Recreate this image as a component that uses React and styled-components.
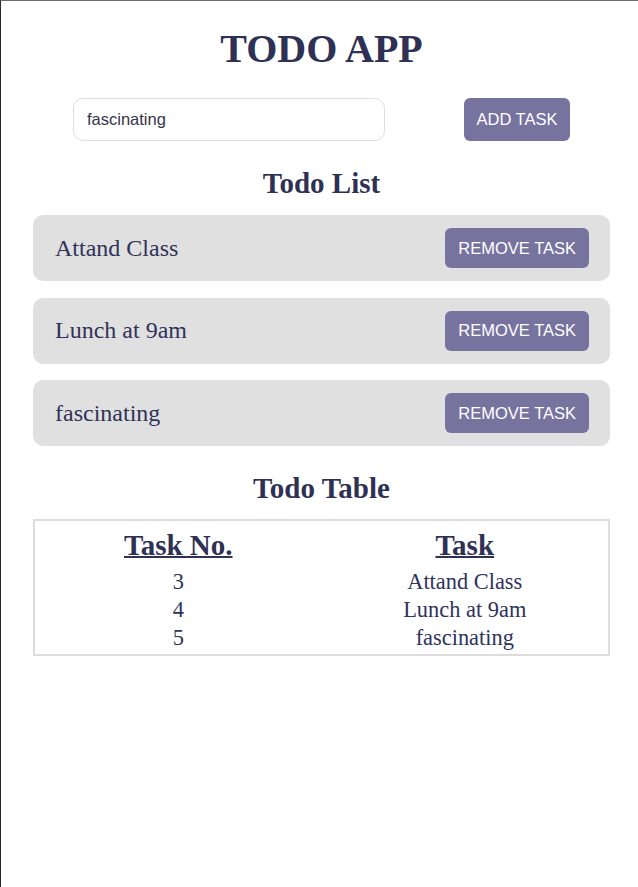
import React, { useState } from "react";
import styled, { createGlobalStyle } from "styled-components";

const Global = createGlobalStyle`
  html, body { margin: 0; padding: 0; background: #fff; }
  body { font-family: "Liberation Serif", "Times New Roman", serif; color: #30325a; }
`;

const Page = styled.div`
  box-sizing: border-box;
  min-height: 887px;
  border-top: 1px solid #6e6e6e;
  border-left: 1px solid #2a2a2a;
  padding: 25px 28px 20px 32px;
  display: flex;
  flex-direction: column;
  align-items: stretch;
`;

const Title = styled.h1`
  margin: 0;
  text-align: center;
  font-size: 40px;
  line-height: 46px;
  font-weight: 700;
  color: #2e3154;
`;

const InputRow = styled.form`
  margin-top: 26px;
  display: flex;
  justify-content: center;
  gap: 79px;
`;

const TextInput = styled.input`
  box-sizing: border-box;
  width: 312px;
  height: 43px;
  border: 1px solid #dedede;
  border-radius: 10px;
  padding: 0 13px;
  font-family: "Liberation Sans", Arial, sans-serif;
  font-size: 16.5px;
  color: #35354a;
  outline: none;
`;

const Button = styled.button`
  box-sizing: border-box;
  height: ${(p) => p.$h}px;
  padding: 0 ${(p) => p.$px}px;
  border: none;
  border-radius: 6px;
  background: #77739f;
  color: #fff;
  font-family: "Liberation Sans", Arial, sans-serif;
  font-size: 16.5px;
  cursor: pointer;
  flex: none;
`;

const SectionTitle = styled.h2`
  margin: ${(p) => p.$mt}px 0 0;
  text-align: center;
  font-size: 29px;
  line-height: 33px;
  font-weight: 700;
  color: #2e3154;
`;

const List = styled.ul`
  list-style: none;
  margin: 15px 0 0;
  padding: 0;
  display: flex;
  flex-direction: column;
  gap: 16.5px;
`;

const Item = styled.li`
  box-sizing: border-box;
  height: 66px;
  background: #e0e0e0;
  border-radius: 10px;
  padding: 0 21px 0 22px;
  display: flex;
  align-items: center;
  justify-content: space-between;
  font-size: 24px;
  color: #30325a;
`;

const Table = styled.table`
  margin-top: 14px;
  width: 100%;
  border: 2px solid #dcdcdc;
  border-collapse: separate;
  border-spacing: 0;
  table-layout: fixed;
  padding: 7px 0 2px;
`;

const Th = styled.th`
  font-size: 29px;
  line-height: 34px;
  font-weight: 700;
  text-decoration: underline;
  text-decoration-thickness: 2px;
  color: #2e3154;
  padding: 0 0 6px;
`;

const Td = styled.td`
  text-align: center;
  font-size: 22.4px;
  line-height: 28px;
  color: #30325a;
  padding: 0;
`;

export default function App() {
  const [value, setValue] = useState("fascinating");
  const tasks = [
    { no: 3, text: "Attand Class" },
    { no: 4, text: "Lunch at 9am" },
    { no: 5, text: "fascinating" },
  ];
  return (
    <>
      <Global />
      <Page>
        <Title>TODO APP</Title>
        <InputRow onSubmit={(e) => e.preventDefault()}>
          <TextInput value={value} onChange={(e) => setValue(e.target.value)} />
          <Button type="submit" $h={43} $px={12.5}>ADD TASK</Button>
        </InputRow>
        <SectionTitle $mt={26}>Todo List</SectionTitle>
        <List>
          {tasks.map((t) => (
            <Item key={t.no}>
              <span>{t.text}</span>
              <Button type="button" $h={40} $px={13}>REMOVE TASK</Button>
            </Item>
          ))}
        </List>
        <SectionTitle $mt={26}>Todo Table</SectionTitle>
        <Table>
          <thead>
            <tr>
              <Th>Task No.</Th>
              <Th>Task</Th>
            </tr>
          </thead>
          <tbody>
            {tasks.map((t) => (
              <tr key={t.no}>
                <Td>{t.no}</Td>
                <Td>{t.text}</Td>
              </tr>
            ))}
          </tbody>
        </Table>
      </Page>
    </>
  );
}
